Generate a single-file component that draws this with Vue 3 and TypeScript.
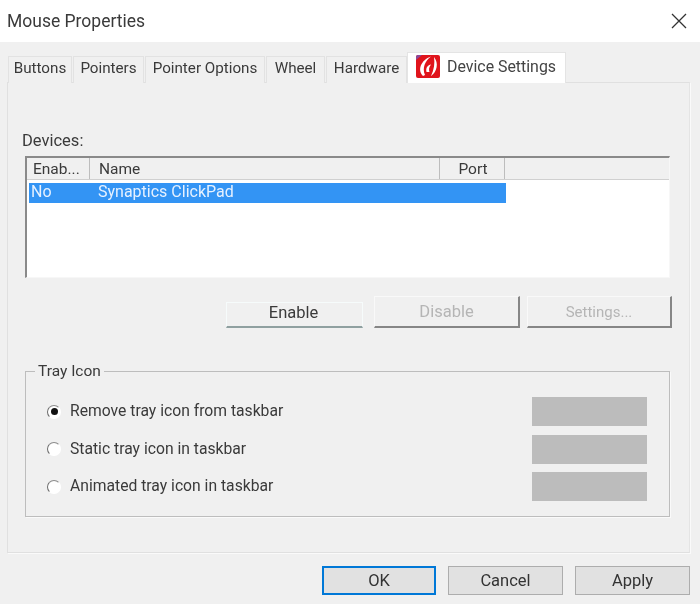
<script setup lang="ts">
interface Col { label: string; cls: string }
const tabs: string[] = ['Buttons', 'Pointers', 'Pointer Options', 'Wheel', 'Hardware']
const cols: Col[] = [
  { label: 'Enab...', cls: 'c-enab' },
  { label: 'Name', cls: 'c-name' },
  { label: 'Port', cls: 'c-port' },
]
const trayOptions: string[] = [
  'Remove tray icon from taskbar',
  'Static tray icon in taskbar',
  'Animated tray icon in taskbar',
]
</script>

<template>
  <div class="window">
    <header class="titlebar">
      <span class="title">Mouse Properties</span>
      <svg class="close" width="16" height="16" viewBox="0 0 16 16">
        <path d="M1 1 L15 15 M15 1 L1 15" stroke="#333" stroke-width="1.3" fill="none" />
      </svg>
    </header>

    <div class="body">
      <nav class="tabs">
        <div v-for="t in tabs" :key="t" class="tab" :class="'tab-' + t.split(' ').join('-').toLowerCase()">{{ t }}</div>
        <div class="tab tab-active">
          <svg class="logo" width="24" height="23" viewBox="0 0 24 23">
            <rect width="24" height="23" rx="2" fill="#e0141c" />
            <path d="M0 5 L0 2 Q0 0 2 0 L6 0 Z" fill="#8a4a9a" />
            <path d="M7 21 C1 15 5 5 15 1.5 C9 6 6 13 9 20 Z" fill="#fff" />
            <path d="M18 2 C23 8 21 17 15 21 C18 15 19 8 18 2 Z" fill="#fff" />
            <path d="M10.5 17 C9.5 12.5 12 10 15 9.5 C13 12 12.5 14.5 13.5 17 Z" fill="#fff" />
          </svg>
          <span>Device Settings</span>
        </div>
      </nav>

      <section class="panel">
        <div class="devices-label">Devices:</div>
        <div class="list">
          <div class="list-head">
            <div v-for="c in cols" :key="c.label" class="head-cell" :class="c.cls">{{ c.label }}</div>
            <div class="head-rest"></div>
          </div>
          <div class="row">
            <span class="cell-enab">No</span>
            <span>Synaptics ClickPad</span>
          </div>
        </div>

        <div class="actions">
          <button class="btn-enable">Enable</button>
          <button class="btn-off btn-disable">Disable</button>
          <button class="btn-off btn-settings">Settings...</button>
        </div>

        <fieldset class="group">
          <legend>Tray Icon</legend>
          <div v-for="(opt, i) in trayOptions" :key="opt" class="option">
            <span class="radio" :class="{ on: i === 0 }"></span>
            <span class="option-text">{{ opt }}</span>
            <span class="swatch"></span>
          </div>
        </fieldset>
      </section>

      <footer class="footer">
        <button class="foot-btn ok">OK</button>
        <button class="foot-btn">Cancel</button>
        <button class="foot-btn">Apply</button>
      </footer>
    </div>
  </div>
</template>

<style>
html, body { margin: 0; background: #fff; }
</style>

<style scoped>
.window {
  width: 700px;
  height: 607px;
  display: flex;
  flex-direction: column;
  background: #fff;
  overflow: hidden;
  font-family: Roboto, "Open Sans", sans-serif;
  font-size: 15.5px;
  color: #333;
  filter: blur(0.45px);
}
.titlebar {
  height: 42px;
  flex: none;
  display: flex;
  align-items: center;
  justify-content: space-between;
  padding: 0 10px 0 7px;
  box-sizing: border-box;
}
.title { font-size: 17.5px; color: #3a3a3a; }
.close { margin-right: 3px; }
.body {
  flex: 1;
  height: 562px;
  margin-bottom: 3px;
  background: #f0f0f0;
  padding: 10px 10px 0 7px;
  box-sizing: border-box;
  display: flex;
  flex-direction: column;
}
.tabs {
  display: flex;
  align-items: flex-end;
  height: 31px;
  padding-left: 1px;
  gap: 1px;
  position: relative;
  z-index: 1;
  margin-bottom: -1px;
}
.tab {
  height: 27px;
  display: flex;
  align-items: center;
  justify-content: center;
  box-sizing: border-box;
  background: #f0f0f0;
  border: 1px solid #e2e2e2;
  border-bottom: 0;
  padding-bottom: 5px;
  white-space: nowrap;
  color: #3a3a3a;
  font-size: 15.2px;
}
.tab-buttons { width: 64px; }
.tab-pointers { width: 71px; }
.tab-pointer-options { width: 120px; }
.tab-wheel { width: 59px; }
.tab-hardware { width: 81px; }
.tab-active {
  width: 159px;
  height: 31px;
  margin-left: -1px;
  background: #fff;
  border-color: #e4e4e4;
  justify-content: flex-start;
  padding: 0 0 3px 8px;
  gap: 7px;
  color: #444;
  font-size: 15.9px;
}
.logo { flex: none; margin-bottom: 1px; }
.panel {
  height: 471px;
  box-sizing: border-box;
  border: 1px solid #e0e0e0;
  border-right-color: #e4e4e4;
  box-shadow: 1px 1px 0 #fafafa;
  background: #f0f0f0;
  padding: 49px 19px 0 17px;
  display: flex;
  flex-direction: column;
}
.devices-label { height: 24px; line-height: 18px; margin-left: -3px; font-size: 16.5px; color: #3a3a3a; }
.list {
  height: 122px;
  flex: none;
  box-sizing: border-box;
  background: #fff;
  border-top: 2px solid #8a8a8a;
  border-left: 2px solid #8a8a8a;
  border-right: 1px solid #f7f7f7;
  border-bottom: 1px solid #f7f7f7;
  padding: 0;
}
.list-head {
  display: flex;
  height: 21px;
  background: #f0f0f0;
  border-bottom: 1px solid #d0d0d0;
  box-sizing: content-box;
}
.head-cell {
  box-sizing: border-box;
  height: 21px;
  line-height: 23px;
  border-right: 1px solid #bdbdbd;
  color: #3a3a3a;
}
.c-enab { width: 63px; padding-left: 6px; }
.c-name { width: 350px; padding-left: 9px; }
.c-port { width: 65px; text-align: center; padding-left: 2px; }
.head-rest { flex: 1; }
.row {
  margin: 3px 0 0 2px;
  width: 477px;
  height: 20px;
  line-height: 18px;
  background: #3394f4;
  color: #e6f1ff;
  display: flex;
  font-size: 16px;
}
.cell-enab { width: 69px; padding-left: 2px; box-sizing: border-box; }
.actions {
  display: flex;
  justify-content: flex-end;
  align-items: flex-end;
  height: 32px;
  margin: 18px -2px 0 0;
}
button {
  font: inherit;
  padding: 0;
  background: #f0f0f0;
  box-sizing: border-box;
}
.btn-enable {
  width: 137px;
  height: 26px;
  margin-right: 11px;
  padding: 0 2px 5px 0;
  border: 1px solid #f6fbfb;
  border-bottom: 2px solid #8fa0a0;
  color: #3a3a3a;
  font-size: 16.5px;
}
.btn-off {
  height: 32px;
  border: 1px solid #f9f9f9;
  border-right: 2px solid #868686;
  border-bottom: 2px solid #868686;
  color: #b5b5b5;
}
.btn-disable { width: 146px; margin-right: 7px; font-size: 16.5px; }
.btn-settings { width: 145px; font-size: 15px; }
.group {
  margin: 36px 0 0;
  height: 153px;
  box-sizing: border-box;
  border: 1px solid #bdbdbd;
  padding: 0 22px 0 21px;
  min-width: 0;
  box-shadow: 1px 1px 0 #fafafa;
}
legend {
  padding: 0 3px;
  margin-left: -12px;
  line-height: 14px;
  color: #3a3a3a;
}
.option {
  display: flex;
  align-items: center;
  height: 29px;
  margin-bottom: 8.5px;
}
.option:first-of-type { margin-top: 19px; }
.radio {
  width: 14px;
  height: 14px;
  flex: none;
  box-sizing: border-box;
  border-radius: 50%;
  background: #fff;
  border: 1.2px solid;
  border-color: #8a8a8a #fff #fff #6a6a6a;
  display: flex;
  align-items: center;
  justify-content: center;
}
.radio.on::after {
  content: "";
  width: 7px;
  height: 7px;
  border-radius: 50%;
  background: #111;
}
.option-text { margin-left: 9px; flex: 1; color: #3a3a3a; padding-bottom: 2px; font-size: 15.7px; }
.swatch {
  width: 115px;
  height: 29px;
  background: #bcbcbc;
}
.footer {
  display: flex;
  justify-content: flex-end;
  gap: 12px;
  margin-top: 13px;
}
.foot-btn {
  width: 115px;
  height: 29px;
  background: #e1e1e1;
  border: 1.5px solid #adadad;
  color: #333;
  font-size: 16.5px;
}
.ok {
  width: 114px;
  border: 2px solid #0078d7;
}
</style>
